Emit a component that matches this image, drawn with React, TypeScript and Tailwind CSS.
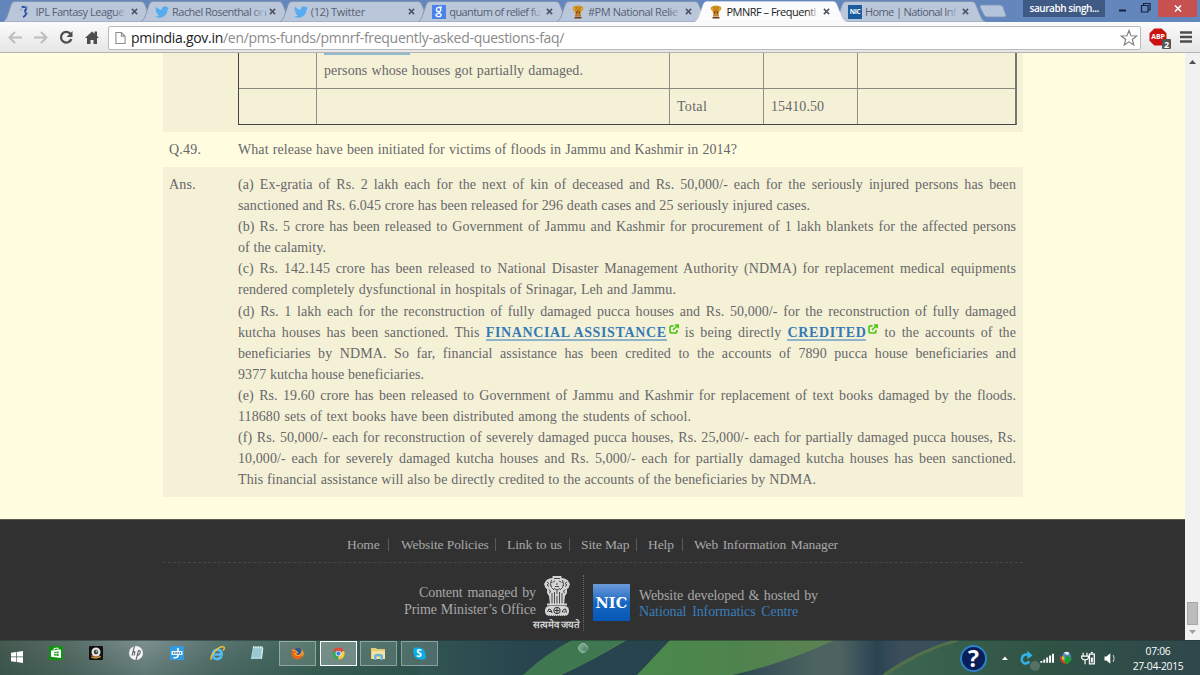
import React from "react";

type Kind = "ipl" | "twitter" | "google" | "emblem" | "nic";

const tabs: { title: string; kind: Kind; titleClass: string; active?: boolean }[] = [
  { title: "IPL Fantasy League", kind: "ipl", titleClass: "tracking-[-0.500px] pl-[2px]" },
  { title: "Rachel Rosenthal on", kind: "twitter", titleClass: "tracking-[-0.550px]" },
  { title: "(12) Twitter", kind: "twitter", titleClass: "tracking-[-0.300px]" },
  { title: "quantum of relief fu", kind: "google", titleClass: "tracking-[-0.600px]" },
  { title: "#PM National Relie", kind: "emblem", titleClass: "tracking-[-0.420px]" },
  { title: "PMNRF – Frequentl", kind: "emblem", titleClass: "tracking-[-0.500px]", active: true },
  { title: "Home | National Inf", kind: "nic", titleClass: "tracking-[-0.620px]" },
];

function Favicon({ kind }: { kind: Kind }) {
  if (kind === "twitter")
    return (
      <svg viewBox="0 0 24 24" className="h-[14px] w-[14px] shrink-0" fill="#55acee">
        <path d="M23.95 4.57a10 10 0 0 1-2.82.77 4.96 4.96 0 0 0 2.16-2.72c-.95.55-2 .96-3.13 1.18a4.92 4.92 0 0 0-8.38 4.48C7.69 8.09 4.07 6.13 1.64 3.16a4.82 4.82 0 0 0-.67 2.48c0 1.71.87 3.21 2.19 4.1a4.9 4.9 0 0 1-2.23-.62v.06a4.92 4.92 0 0 0 3.95 4.83 5 5 0 0 1-2.21.08 4.94 4.94 0 0 0 4.6 3.42A9.87 9.87 0 0 1 0 19.54a14 14 0 0 0 7.55 2.21c9.05 0 14-7.5 14-13.98 0-.21 0-.42-.02-.63a9.94 9.94 0 0 0 2.42-2.57z" />
      </svg>
    );
  if (kind === "google")
    return (
      <span className="flex h-[14px] w-[14px] shrink-0 items-center justify-center bg-[#4a83ec]">
        <svg viewBox="0 0 14 14" className="h-[14px] w-[14px]" fill="none" stroke="#fff" strokeWidth="1.300">
          <ellipse cx="6.600" cy="4.500" rx="2.200" ry="2.200" />
          <path d="M7 2.200h3M7.500 7c-2 .8 2.200 1.500 1.700 3.200-.6 2-5.200 1.700-5.200-.1 0-1.300 1.500-1.700 3.500-1.700" />
        </svg>
      </span>
    );
  if (kind === "nic")
    return (
      <span className="flex h-[14px] w-[14px] shrink-0 items-center justify-center bg-[#1b5c9e] text-[6.500px] font-bold tracking-[-0.300px] text-white">
        NIC
      </span>
    );
  if (kind === "emblem")
    return (
      <svg viewBox="0 0 14 14" className="h-[14px] w-[14px] shrink-0">
        <path d="M2 2l2-1 3-.5 3 .5 2 1 .3 2.500L10.500 6l-1 4h-5l-1-4-1.800-1.500z" fill="#d2921f" />
        <path d="M4 10.200h6v1.300H4z" fill="#a8641a" />
        <path d="M3.500 12h7v1.500h-7z" fill="#6f3d10" />
        <path d="M4.800 3h1M8.200 3h1M5.500 6v3.500M8.500 6v3.500M7 4.500v4" stroke="#8a4a12" strokeWidth=".9" />
        <path d="M2.500 3l1.500 1M11.500 3L10 4" stroke="#f0c35a" strokeWidth=".8" />
      </svg>
    );
  return (
    <svg viewBox="0 0 14 14" className="ml-[1px] h-[14px] w-[13px] shrink-0">
      <path d="M4 2q3-1.500 5 .5 0 2-1.500 3 0 1.500 1.500 3-1 3-3.500 4" fill="none" stroke="#2d4f9e" strokeWidth="2.100" />
      <path d="M7 1l3.500.5-2 1.500M8 6.500l2.500 2-1.500 2" fill="none" stroke="#7f9bd0" strokeWidth="1" />
      <circle cx="3" cy="4.500" r="1.200" fill="#8fa6d4" />
    </svg>
  );
}

function Tab({ tab }: { tab: (typeof tabs)[number] }) {
  return (
    <div className={`relative flex h-[22px] w-[138.600px] shrink-0 items-center pl-[14px] ${tab.active ? "z-10" : ""}`}>
      <svg viewBox="0 0 153 22" className="absolute top-0 left-0 h-[22px] w-[153px]">
        <path
          d="M0 22C3 20 4 17 5 14L8 5Q9 1.500 12 1.500H138Q141 1.500 142 5L146 15Q148 21 152 22Z"
          fill={tab.active ? "#fbfbfb" : "#bac7db"}
          stroke={tab.active ? "#dfe3ea" : "#8292ae"}
          strokeWidth={tab.active ? 0.4 : 0.9}
        />
      </svg>
      <div className="relative flex items-center pt-px">
        <Favicon kind={tab.kind} />
        <div className="relative ml-[3px] w-[93px]">
          <div className={`text-[11px] leading-[16px] whitespace-nowrap ${tab.titleClass} ${tab.active ? "text-[#222]" : "text-[#555f70]"}`}>
            {tab.title}
          </div>
          <div className={`absolute top-0 right-0 h-full w-[12px] bg-linear-to-r from-transparent ${tab.active ? "to-[#fbfbfb]" : "to-[#bac7db]"}`} />
        </div>
        <svg viewBox="0 0 8 8" className="ml-[4px] h-[7px] w-[7px]" stroke="#4b5363" strokeWidth="1.700">
          <path d="M1 1l6 6M7 1L1 7" />
        </svg>
      </div>
    </div>
  );
}

function TabStrip() {
  return (
    <div className="flex h-[22px] shrink-0 overflow-hidden bg-[#6386bd] pl-[2.500px]">
      {tabs.map((t) => (
        <Tab key={t.title} tab={t} />
      ))}
      <svg viewBox="0 0 28 14" className="mt-[4px] ml-[6.500px] h-[14px] w-[28px] shrink-0">
        <path d="M2 1h19q2 0 3 2l3 8q0 2-2 2H8q-2 0-3-2L1 3q0-2 1-2z" fill="#b5c4db" stroke="#7d90b4" strokeWidth="0.800" />
      </svg>
      <div className="ml-[16px] flex h-[17px] w-[82px] items-center justify-center bg-[#3f5a85] text-[10px] font-semibold tracking-[-0.450px] text-white">
        saurabh singh...
      </div>
      <svg viewBox="0 0 50 18" className="h-[18px] w-[50px] shrink-0" fill="none" stroke="#16243c">
        <path d="M14 10.500h7" strokeWidth="2" />
        <path d="M36.500 5.500h6.500v6.500h-6.500zM38.500 5V3.500H45V10h-1.500" strokeWidth="1.200" />
      </svg>
      <div className="ml-[3px] flex h-[17px] w-[39px] items-center justify-center bg-[#c75050]">
        <svg viewBox="0 0 8 8" className="h-[7px] w-[8px]" stroke="#fff" strokeWidth="1.600">
          <path d="M.5.5l7 7M7.500.5l-7 7" />
        </svg>
      </div>
    </div>
  );
}

function Toolbar() {
  return (
    <div className="flex h-[31px] shrink-0 items-center border-b border-[#b4b4b4] bg-linear-to-b from-[#fbfbfb] to-[#e6e6e6]">
      <svg viewBox="0 0 108 30" className="h-[30px] w-[108px] shrink-0" fill="none">
        <path d="M22 15.500H10M15 10l-5.500 5.500L15 21M34 15.500h12M41 10l5.500 5.500L41 21" stroke="#bdbdbd" strokeWidth="2" />
        <path d="M70.500 12a5.300 5.300 0 1 0 .8 5" stroke="#4d4d4d" strokeWidth="2.300" />
        <path d="M72.500 9v6h-6z" fill="#4d4d4d" />
        <path d="M85 16l7-6.500 2.500 2.300V9.500H97v4.500l2 2h-2v6h-3.500v-4h-3v4H87v-6z" fill="#4d4d4d" />
      </svg>
      <div className="mt-px flex h-[24px] w-[1033px] items-center rounded-[2px] border border-[#b9b9b9] bg-white">
        <svg viewBox="0 0 12 14" className="ml-[6px] h-[14px] w-[11px]" fill="#fff" stroke="#8d8d8d" strokeWidth="1.200">
          <path d="M1 1h6l4 4v8H1zM7 1v4h4" />
        </svg>
        <div className="ml-[5px] flex-1 text-[14px] leading-[20px] tracking-[-0.290px] whitespace-nowrap text-[#8a8a8a]">
          <span className="text-[#222]">pmindia.gov.in</span>/en/pms-funds/pmnrf-frequently-asked-questions-faq/
        </div>
        <svg viewBox="0 0 18 18" className="mr-[2px] h-[18px] w-[18px]" fill="#fff" stroke="#7d7d7d" strokeWidth="1.100">
          <path d="M9 1.500l2 5.300 5.700.2-4.400 3.500 1.500 5.500L9 12.900l-4.800 3.100 1.500-5.500L1.300 7 7 6.800z" />
        </svg>
      </div>
      <div className="relative ml-[8px] flex h-[18px] w-[18px] items-center justify-center">
        <svg viewBox="0 0 18 18" className="absolute inset-0 h-[18px] w-[18px]">
          <path d="M5.300.5h7.400l4.800 4.800v7.400l-4.800 4.800H5.300L.5 12.700V5.300z" fill="#cc1111" />
        </svg>
        <span className="relative text-[7px] font-bold tracking-[-0.200px] text-white">ABP</span>
        <span className="absolute right-[-4px] bottom-[-3px] flex h-[10px] w-[9px] items-center justify-center rounded-[1px] bg-[#555] text-[9px] leading-none font-bold text-white">
          2
        </span>
      </div>
      <svg viewBox="0 0 12 12" className="ml-[13px] h-[12px] w-[12px]" stroke="#4d4d4d" strokeWidth="2.400">
        <path d="M0 1.500h12M0 6h12M0 10.500h12" />
      </svg>
    </div>
  );
}

function Ln({ w = "w-[778px]", children }: { w?: string; children: React.ReactNode }) {
  return <div className={`${w} text-justify whitespace-nowrap [text-align-last:justify]`}>{children}</div>;
}

function Ext({ children }: { children: React.ReactNode }) {
  return (
    <>
      <a className="inline-block border-b-2 border-[#8fb3c9] text-[14px] leading-[13px] font-bold tracking-[0.640px] text-[#337ab7]">{children}</a>
      <svg viewBox="0 0 10 10" className="mb-[9px] ml-[2px] inline-block h-[10px] w-[10px]" fill="none" stroke="#52c41c" strokeWidth="1.700">
        <path d="M4.500 1.800H3Q1 1.800 1 3.800V7.200Q1 9 3 9H6Q8 9 8 7V6M4 6l4.500-4.500M5.800 1H9.200V4.300" />
      </svg>
    </>
  );
}

function Content() {
  return (
    <div className="flex h-[466px] flex-col pl-[163px] text-[14px] leading-[21.100px] tracking-[0.080px] text-[#67676a]">
      <div className="h-[79px] w-[860px] shrink-0 bg-[#f5f1d7] pl-[75px]">
        <div className="h-[72px] w-[779px] border-r-2 border-b border-l border-[#444] border-r-[#77776f]">
          <div className="flex h-[36px] border-b border-[#8a8a82]">
            <div className="w-[78px] border-r border-[#8f8f88]" />
            <div className="w-[353px] border-r border-[#8f8f88] pl-[7px]">
              <div className="h-[2px] w-[86px] bg-[#8fb9cf]" />
              <div className="pt-[5px]">
                <Ln w="w-[259px]">persons whose houses got partially damaged.</Ln>
              </div>
            </div>
            <div className="w-[94px] border-r border-[#8f8f88]" />
            <div className="w-[94px] border-r border-[#8f8f88]" />
          </div>
          <div className="flex h-[35px] items-center">
            <div className="h-full w-[78px] border-r border-[#8f8f88]" />
            <div className="h-full w-[353px] border-r border-[#8f8f88]" />
            <div className="flex h-full w-[94px] items-center border-r border-[#8f8f88] pl-[7px] tracking-[0.300px]">Total</div>
            <div className="flex h-full w-[94px] items-center border-r border-[#8f8f88] pl-[7px]">15410.50</div>
          </div>
        </div>
      </div>
      <div className="flex h-[35px] shrink-0 pt-[7px] pl-[6px]">
        <div className="w-[69px] tracking-[0.200px]">Q.49.</div>
        <Ln w="w-[499px]">What release have been initiated for victims of floods in Jammu and Kashmir in 2014?</Ln>
      </div>
      <div className="flex h-[330px] w-[860px] shrink-0 bg-[#f5f1d7] pt-[7px] pl-[6px]">
        <div className="w-[69px] tracking-[0.200px]">Ans.</div>
        <div>
          <Ln>(a) Ex-gratia of Rs. 2 lakh each for the next of kin of deceased and Rs. 50,000/- each for the seriously injured persons has been</Ln>
          <Ln w="w-[572px]">sanctioned and Rs. 6.045 crore has been released for 296 death cases and 25 seriously injured cases.</Ln>
          <Ln>(b) Rs. 5 crore has been released to Government of Jammu and Kashmir for procurement of 1 lakh blankets for the affected persons</Ln>
          <Ln w="w-[88px]">of the calamity.</Ln>
          <Ln>(c) Rs. 142.145 crore has been released to National Disaster Management Authority (NDMA) for replacement medical equipments</Ln>
          <Ln w="w-[438px]">rendered completely dysfunctional in hospitals of Srinagar, Leh and Jammu.</Ln>
          <Ln>(d) Rs. 1 lakh each for the reconstruction of fully damaged pucca houses and Rs. 50,000/- for the reconstruction of fully damaged</Ln>
          <div className="h-[21.100px]">
            <Ln>
              kutcha houses has been sanctioned. This <Ext>FINANCIAL ASSISTANCE</Ext> is being directly <Ext>CREDITED</Ext> to the accounts of the
            </Ln>
          </div>
          <Ln>beneficiaries by NDMA. So far, financial assistance has been credited to the accounts of 7890 pucca house beneficiaries and</Ln>
          <Ln w="w-[186px]">9377 kutcha house beneficiaries.</Ln>
          <Ln>(e) Rs. 19.60 crore has been released to Government of Jammu and Kashmir for replacement of text books damaged by the floods.</Ln>
          <Ln w="w-[453px]">118680 sets of text books have been distributed among the students of school.</Ln>
          <Ln>(f) Rs. 50,000/- each for reconstruction of severely damaged pucca houses, Rs. 25,000/- each for partially damaged pucca houses, Rs.</Ln>
          <Ln>10,000/- each for severely damaged kutcha houses and Rs. 5,000/- each for partially damaged kutcha houses has been sanctioned.</Ln>
          <Ln w="w-[578px]">This financial assistance will also be directly credited to the accounts of the beneficiaries by NDMA.</Ln>
        </div>
      </div>
    </div>
  );
}

function Sep({ m }: { m: string }) {
  return <span className={`h-[13px] w-px bg-[#5a5a5a] ${m}`} />;
}

function StateEmblem() {
  return (
    <svg viewBox="0 0 28 43" className="h-[43px] w-[28px]" fill="#d4d4d4">
      <path d="M9.500 1h9v2l3 .5 3 1.500 2.500 4-1.500 4-1.500 1v4l-2 3-1 8.500H7L6 21l-2-3v-4l-1.500-1L1 9l2.500-4 3-1.500 3-.5z" />
      <path
        d="M11 3.500h6M10 7l2-1M18 7l-2-1M13 9h2M12 11.500h4M4 7l2 1.500L4 10l2 1.500M24 7l-2 1.500 2 1.500-2 1.500M8.500 5q-2 4 0 7.500L11 15M19.500 5q2 4 0 7.500L17 15M11 13.500l3 1.500 3-1.500M14 15v4M5.500 14.500l2 1.500-1 2M22.500 14.500l-2 1.500 1 2M9 18v10.500M11.500 17v12M14 21v8M16.500 17v12M19 18v10.500"
        fill="none"
        stroke="#3b3b3b"
        strokeWidth=".9"
      />
      <path d="M8 7.500h1.500M18.500 7.500H20M7 10.500h1M20 10.500h1" stroke="#555" />
      <path d="M4 29.500h20" stroke="#d4d4d4" strokeWidth="2" />
      <rect x="2" y="31" width="24" height="10" rx="4.500" />
      <circle cx="14" cy="35.500" r="3.200" fill="none" stroke="#333" />
      <path d="M14 33v5M11.500 35.500h5M4.500 37l1.500-3 2 1 1 3M6 36.500h2M19 37.500l1.500-3 2-.5 1 3.500M20.500 37h2" fill="none" stroke="#333" />
      <path d="M4 40.500h20" stroke="#555" strokeDasharray="1 1" strokeWidth=".8" />
    </svg>
  );
}

function Footer() {
  return (
    <div className="flex h-[121px] flex-col border-t border-[#5d5c50] bg-[#313131] pl-[163px] text-[13.500px] tracking-[-0.100px] text-[#a8a8a8]">
      <div className="flex h-[43px] w-[860px] shrink-0 items-center border-b border-dashed border-[#474747] pt-[7px] pl-[184px] leading-[16px]">
        <Ln w="w-[34px]">Home</Ln>
        <Sep m="ml-[7px] mr-[12px]" />
        <Ln w="w-[87px]">Website Policies</Ln>
        <Sep m="ml-[7px] mr-[11px]" />
        <Ln w="w-[55px]">Link to us</Ln>
        <Sep m="ml-[7px] mr-[11px]" />
        <Ln w="w-[48px]">Site Map</Ln>
        <Sep m="ml-[7px] mr-[11px]" />
        <Ln w="w-[26px]">Help</Ln>
        <Sep m="ml-[8px] mr-[11px]" />
        <Ln w="w-[144px]">Web Information Manager</Ln>
      </div>
      <div className="flex">
        <div className="mt-[22px] flex w-[373px] flex-col items-end text-[14px] leading-[16.500px]">
          <Ln w="w-[117px]">Content managed by</Ln>
          <Ln w="w-[132px]">Prime Minister’s Office</Ln>
        </div>
        <div className="mt-[12px] -ml-[4px] flex h-[56px] w-[52px] flex-col items-center border-r border-dotted border-[#6a6a6a] pr-[2px]">
          <StateEmblem />
          <div className="pt-px text-[9.800px] leading-[12px] font-semibold tracking-normal whitespace-nowrap text-[#d2d2d2]">सत्यमेव जयते</div>
        </div>
        <div className="mt-[21px] ml-[9px] flex h-[37px] w-[37px] items-center justify-center bg-linear-to-b from-[#6b9bd8] via-[#1468c4] to-[#0757b5] font-['DejaVu_Serif','Liberation_Serif',serif] text-[14.500px] font-bold tracking-[0.200px] text-white">
          NIC
        </div>
        <div className="mt-[24.500px] ml-[9px] text-[14px] leading-[16.500px]">
          <Ln w="w-[179px]">Website developed &amp; hosted by</Ln>
          <div className="text-[#3a7ebb]">
            <Ln w="w-[159px]">National Informatics Centre</Ln>
          </div>
        </div>
      </div>
    </div>
  );
}

function Scrollbar() {
  return (
    <div className="flex w-[15px] flex-col items-center bg-[#f1f1f1]">
      <svg viewBox="0 0 7 4" className="mt-[7px] h-[4px] w-[7px]" fill="#505050">
        <path d="M0 4L3.500 0 7 4z" />
      </svg>
      <div className="flex-1" />
      <div className="h-[23px] w-[11px] border border-[#a8a8a8] bg-[#bcbcbc]" />
      <svg viewBox="0 0 7 4" className="mt-[5px] mb-[6px] h-[4px] w-[7px]" fill="#a0a0a0">
        <path d="M0 0h7L3.500 4z" />
      </svg>
    </div>
  );
}

function Wallpaper() {
  return (
    <svg viewBox="0 0 1200 35" preserveAspectRatio="none" className="absolute inset-0 h-full w-full">
      <defs>
        <linearGradient id="wp">
          <stop offset="0" stopColor="#45594f" />
          <stop offset=".06" stopColor="#5a6e68" />
          <stop offset=".12" stopColor="#7d9090" />
          <stop offset=".18" stopColor="#5a7470" />
          <stop offset=".26" stopColor="#3d6357" />
          <stop offset=".36" stopColor="#305451" />
          <stop offset=".44" stopColor="#28444f" />
          <stop offset=".6" stopColor="#27434e" />
          <stop offset=".68" stopColor="#4d6362" />
          <stop offset=".7" stopColor="#4d6362" />
          <stop offset=".73" stopColor="#2a4452" />
          <stop offset=".75" stopColor="#3b4e5a" />
          <stop offset="1" stopColor="#34505a" />
        </linearGradient>
        <linearGradient id="leaf">
          <stop offset="0" stopColor="#4a8a4b" />
          <stop offset=".5" stopColor="#4e834d" />
          <stop offset="1" stopColor="#5d8154" />
        </linearGradient>
        <linearGradient id="right">
          <stop offset="0" stopColor="#3f6752" />
          <stop offset=".5" stopColor="#2f5344" />
          <stop offset="1" stopColor="#30474d" />
        </linearGradient>
        <linearGradient id="shade" x2="0" y2="1">
          <stop offset="0" stopColor="#264a40" stopOpacity="0" />
          <stop offset="1" stopColor="#264a40" stopOpacity=".35" />
        </linearGradient>
      </defs>
      <path d="M0 0h1200v35H0z" fill="url(#wp)" />
      <path d="M0 0h420v35H0z" fill="url(#shade)" />
      <path d="M572 0h54q-35 21-66 35h-37Q545 14 572 0z" fill="#3e7750" />
      <path d="M626 0q-35 21-66 35" stroke="#4f7f58" fill="none" />
      <path d="M670 0h165q-50 23-102 35h-96z" fill="url(#leaf)" />
      <path d="M884 35Q920 10 958 0h242v35z" fill="url(#right)" />
      <path d="M884 35Q920 10 958 0" stroke="#52714b" strokeWidth="3" fill="none" />
      <circle cx="583" cy="8" r="4.500" fill="#73a18a" stroke="#9dbbaa" />
      <circle cx="585" cy="9" r="2.500" fill="#5a9070" />
      <circle cx="1035" cy="26" r="5" fill="#83958c" opacity=".45" />
      <path d="M0 .5h1200" stroke="#20322f" opacity=".5" />
    </svg>
  );
}

function Slot({ on, boxed, children }: { on?: boolean; boxed?: boolean; children: React.ReactNode }) {
  const box = boxed ? (on ? "border border-white bg-white/30" : "border border-white/35 bg-white/15") : "";
  return <div className={`flex h-[25px] w-[37px] shrink-0 items-center justify-center ${box}`}>{children}</div>;
}

function Taskbar() {
  return (
    <div className="relative flex h-[35px] shrink-0 overflow-hidden">
      <Wallpaper />
      <div className="relative flex w-full">
        <svg viewBox="0 0 13 13" className="mt-[11px] ml-[11px] h-[12px] w-[12px] shrink-0" fill="#fff">
          <path d="M0 2l5.500-.8V6H0zM6.200 1L13 0v6H6.200zM0 6.800h5.500v5L0 11zM6.200 6.800H13V13l-6.800-1z" />
        </svg>
        <div className="ml-[14px] flex gap-[3.400px] pt-[0.600px]">
          <Slot>
            <svg viewBox="0 0 14 14" className="h-[14px] w-[14px]">
              <path d="M0 0h14v14H0z" fill="#109410" />
              <path d="M2 4.500l10-1V12l-10-1.300z" fill="#fff" />
              <path d="M5 4V2.500l4-.5v2" stroke="#fff" fill="none" />
              <path d="M5.200 6l1.600-.2v1.500H5.200zM7.400 5.700l2.200-.2v1.800H7.400zM5.200 8h1.600v1.700l-1.600-.2zM7.400 8h2.200v2l-2.200-.3z" fill="#109410" />
            </svg>
          </Slot>
          <Slot>
            <svg viewBox="0 0 14 14" className="h-[14px] w-[14px]">
              <rect width="14" height="14" rx="1" fill="#101010" />
              <path d="M2 9l5-1 5 2-1 2H3z" fill="#a84c20" />
              <path d="M2.500 11.500q5 2 9-1" stroke="#bcc33a" fill="none" />
              <circle cx="7" cy="6" r="4.500" fill="#e2e2e2" />
              <circle cx="7" cy="6" r="2.200" fill="#333" />
              <circle cx="7.500" cy="5.500" r="1" fill="#9ccfd8" />
            </svg>
          </Slot>
          <Slot>
            <svg viewBox="0 0 14 14" className="h-[14px] w-[14px]">
              <circle cx="7" cy="7" r="7" fill="#f4f4f4" />
              <path d="M5.500 0L3 9.500M4 6.200q2.300-1.600 1.800.3L5 9.500M9.500 4.500L7 14M9 4.700q3-.6 2 2.300-.8 2.700-3 2.300" fill="none" stroke="#5b6a68" strokeWidth="1.100" />
            </svg>
          </Slot>
          <Slot>
            <svg viewBox="0 0 14 14" className="h-[14px] w-[14px]">
              <path d="M0 0h14v14H0z" fill="#3399e0" />
              <path d="M8 2v3M8 9q0 3.500-4.500 2.500" stroke="#fff" strokeWidth="1.600" fill="none" />
              <path d="M1.500 5h11v4h-11z" fill="#eaf5fd" />
              <path d="M3 7h8" stroke="#376d9e" strokeWidth="1.600" strokeDasharray="1.500 .8" />
            </svg>
          </Slot>
          <Slot>
            <svg viewBox="0 0 16 16" className="h-[15px] w-[15px]" fill="none">
              <path d="M12.500 11q-2 3-5 3-4.500-.5-4.500-5t5-5q4.500.5 4.500 5H4.500" stroke="#55bdf2" strokeWidth="2.700" />
              <path d="M2 14.500Q-1 13 4.500 6.500T14.500 1q2 .7-.5 4" stroke="#f0c137" strokeWidth="1.500" />
            </svg>
          </Slot>
          <Slot>
            <svg viewBox="0 0 14 14" className="h-[14px] w-[14px]">
              <path d="M3 1h10l-1.500 12H.8z" fill="#a5d0dc" />
              <path d="M3.500 4h8M3.200 6h8M3 8h8M2.700 10h8" stroke="#8bb9c8" strokeWidth=".7" />
              <path d="M3 1h10" stroke="#dce6e8" strokeWidth="2" strokeDasharray="1 .7" />
              <path d="M12.800 2l-1.300 11" stroke="#eee" />
            </svg>
          </Slot>
          <Slot boxed>
            <svg viewBox="0 0 14 14" className="h-[13px] w-[13px]">
              <circle cx="7" cy="7" r="6.500" fill="#e8651b" />
              <path d="M4 2q4-3 8 1 1 3-2 5-3 1-4-1z" fill="#27599c" />
              <path d="M1 3q2 1 4 1l2 2-3 1q1 3 5 2 3-1 3-5 2 3 0 6" fill="none" stroke="#f5a72a" strokeWidth="1.200" />
            </svg>
          </Slot>
          <Slot boxed on>
            <svg viewBox="0 0 14 14" className="h-[13px] w-[13px]">
              <path d="M7 7L1.200 4A6.500 6.500 0 0 1 12.800 4z" fill="#dd4b3e" />
              <path d="M7 7L1.200 4A6.500 6.500 0 0 0 7 13.500z" fill="#3aa757" />
              <path d="M7 7l5.800-3A6.500 6.500 0 0 1 7 13.500z" fill="#f8cf3b" />
              <circle cx="7" cy="7" r="3" fill="#fff" />
              <circle cx="7" cy="7" r="2.300" fill="#3f83e8" />
            </svg>
          </Slot>
          <Slot boxed>
            <svg viewBox="0 0 15 13" className="h-[13px] w-[15px]">
              <path d="M0 1h5l1 1h8v10H0z" fill="#e4cc7d" />
              <path d="M1 4h13v8H1z" fill="#f5e4a1" />
              <path d="M3 13V8q4-2.500 9 0v5H9.500V9.500h-4V13z" fill="#6db4dd" />
            </svg>
          </Slot>
          <Slot boxed>
            <div className="relative flex h-[13px] w-[13px] items-center justify-center">
              <svg viewBox="0 0 13 13" className="absolute inset-0 h-[13px] w-[13px]" fill="#0aaeea">
                <circle cx="6.500" cy="6.500" r="5.700" />
                <circle cx="3.700" cy="3.700" r="3.500" />
                <circle cx="9.300" cy="9.300" r="3.500" />
              </svg>
              <span className="relative text-[10px] leading-none font-bold text-white">S</span>
            </div>
          </Slot>
        </div>
        <div className="flex-1" />
        <div className="mt-[5px] flex h-[27px] w-[27px] items-center justify-center rounded-full border-2 border-[#2b82c9] bg-[#0a1f58] text-[23px] leading-none font-bold text-white">
          ?
        </div>
        <svg viewBox="0 0 132 35" className="mt-[1px] h-[34px] w-[132px] shrink-0" fill="none">
          <path d="M13.500 19.500l3-3.500 3 3.500z" fill="#fff" />
          <path d="M40.500 14.200q-5-1-6.300 2.800t2 6q3 1 5.500-2" stroke="#34b2e8" strokeWidth="2.500" />
          <path d="M39.500 10l5.500 5-5.500 3.500z" fill="#34b2e8" />
          <path d="M54 22.500v-2M57 22.500v-3.500M60 22.500v-5.500M63 22.500v-7.500M66 22.500v-9.500" stroke="#fff" strokeWidth="2" />
          <circle cx="80" cy="16" r="4.500" fill="#5d83cb" />
          <path d="M77 12q3-2 6 0l-2 3z" fill="#dce8f4" />
          <path d="M74 16q0 6 6 7" stroke="#d93c21" strokeWidth="2" />
          <path d="M76 16q0 4 4 5" stroke="#f2c82a" strokeWidth="2" />
          <path d="M79 15h4v3h3l-5 6-5-5h3z" fill="#1aa032" />
          <path d="M97 12v3M101 12v3M95.500 15.500h7v2q-1 2-3.500 2t-3.500-2zM99 19v5" stroke="#fff" strokeWidth="1.200" />
          <path d="M103.500 13.500h5v10h-5zM105 12h2" stroke="#fff" strokeWidth="1.300" />
          <path d="M105 17h2v5h-2z" fill="#fff" />
          <path d="M119 16h2l4-3.500v11L121 20h-2z" fill="#fff" />
          <path d="M128 14.500q2 3.500 0 7" stroke="#ddd" />
        </svg>
        <div className="mr-[16px] ml-[13px] flex w-[52px] shrink-0 flex-col items-center pt-[3.500px] text-[10.300px] leading-[15px] tracking-[-0.300px] whitespace-nowrap text-white">
          <span>07:06</span>
          <span>27-04-2015</span>
        </div>
      </div>
    </div>
  );
}

export default function App() {
  return (
    <div className="flex h-[675px] w-[1200px] flex-col overflow-hidden bg-[#fffcdf] font-['Open_Sans','Noto_Sans',sans-serif]">
      <TabStrip />
      <Toolbar />
      <div className="flex h-[587px] shrink-0">
        <div className="w-[1185px] font-['Liberation_Serif',serif]">
          <Content />
          <Footer />
        </div>
        <Scrollbar />
      </div>
      <Taskbar />
    </div>
  );
}
